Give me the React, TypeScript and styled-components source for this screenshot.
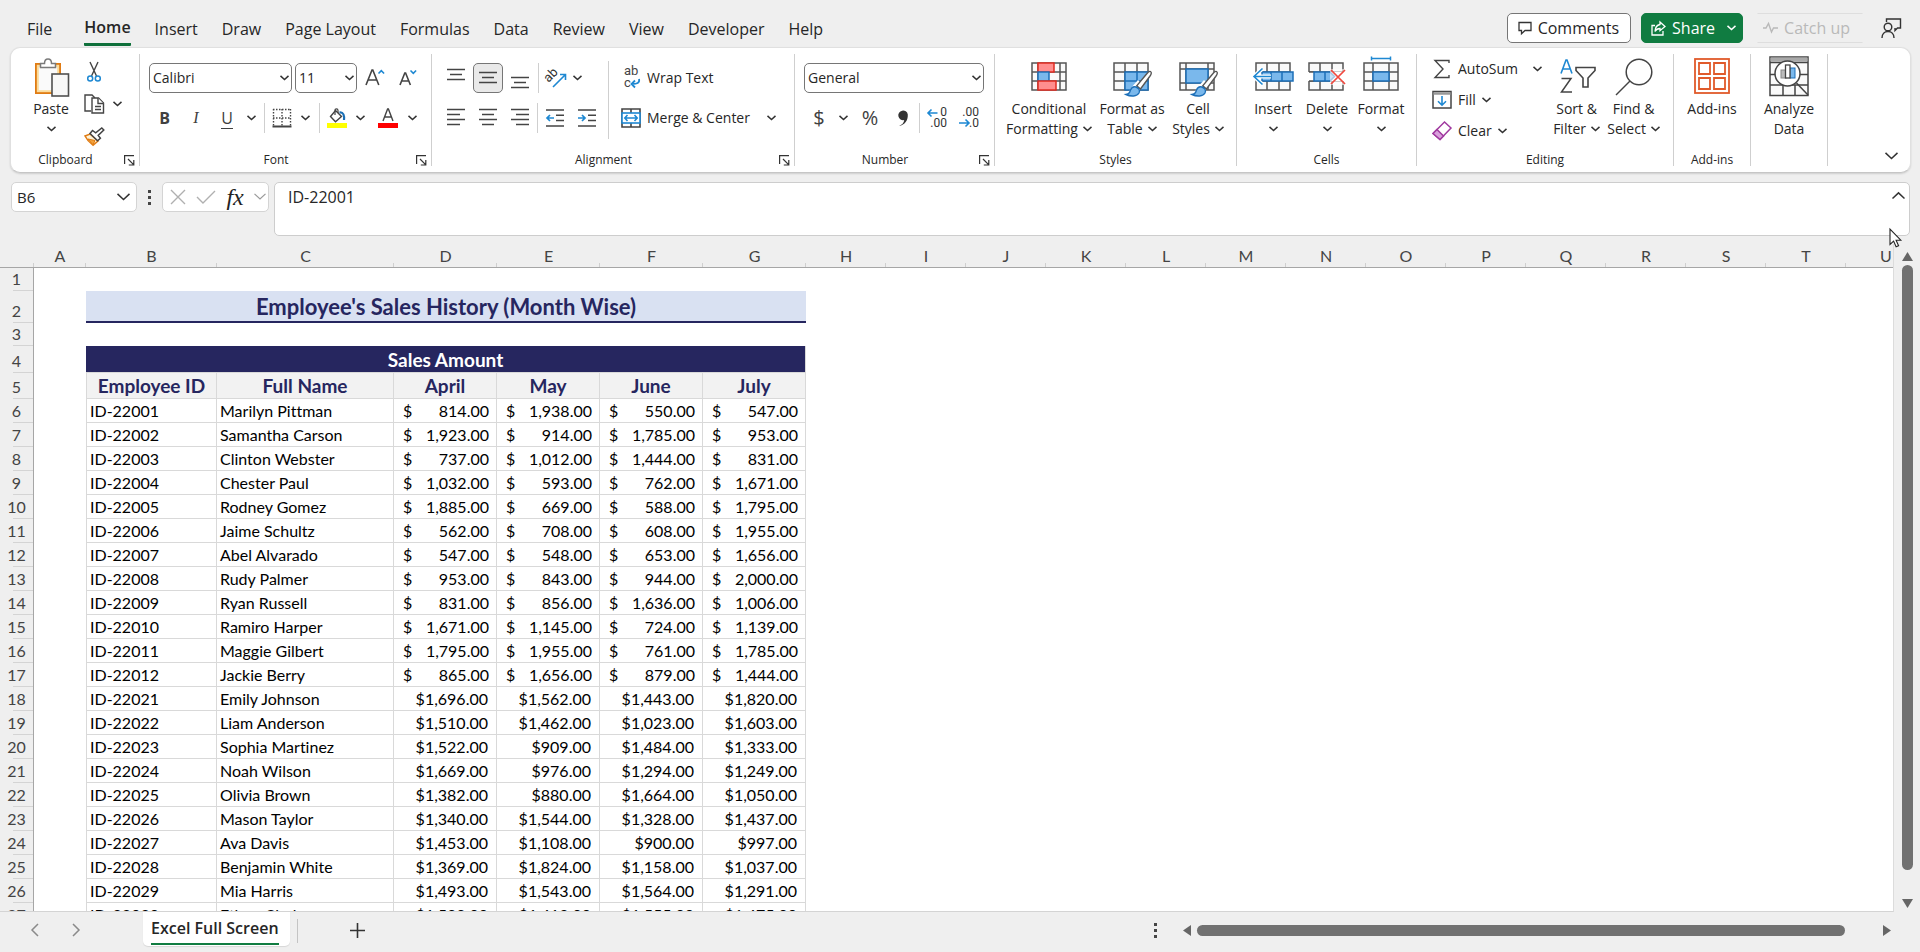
import React from 'react';
import styled, { createGlobalStyle, css } from 'styled-components';

const ui = `"Open Sans", "Noto Sans", sans-serif`;
const cell = `Lato, "Open Sans", sans-serif`;
const navy = '#26265f';
const blue = '#1e88d2';
const ink = '#404040';

const Global = createGlobalStyle`
  *, *::before, *::after { box-sizing: border-box; }
  body { margin: 0; background: #efefef; font-family: ${ui}; color: #262626; }
  button, select, input, textarea { font: inherit; color: inherit; }
  svg { display: block; flex: none; overflow: visible; }
`;

const Window = styled.div`
  height: 100vh;
  display: flex;
  flex-direction: column;
  overflow: hidden;
  background: #efefef;
`;

/* ---------- top tabs ---------- */

const TopBar = styled.header`
  display: flex;
  align-items: center;
  justify-content: space-between;
  height: 47px;
  flex: none;
  padding: 0 18px 0 27px;
`;

const Tabs = styled.nav`
  display: flex;
  gap: 24px;
  padding-top: 10px;
`;

const Tab = styled.button<{ $active?: boolean; $first?: boolean }>`
  border: 0;
  padding: 0;
  margin-right: ${p => (p.$first ? 8 : 0)}px;
  background: none;
  font-size: 16px;
  line-height: 30px;
  height: 34px;
  white-space: nowrap;
  ${p => p.$active && css`
    font-weight: 600;
    border-bottom: 3px solid #0f703b;
    border-radius: 1px;
  `}
`;

const TopActions = styled.div`
  display: flex;
  align-items: center;
  padding-top: 9px;
`;

const ActionButton = styled.button<{ $kind?: 'primary' | 'quiet' }>`
  display: flex;
  align-items: center;
  gap: 6px;
  height: 30px;
  padding: 0 11px 0 10px;
  margin-right: 10px;
  border: 1px solid #767676;
  border-radius: 5px;
  background: #fff;
  font-size: 16px;
  line-height: 20px;
  white-space: nowrap;
  ${p => p.$kind === 'primary' && css`
    background: #107c41;
    border-color: #107c41;
    color: #fff;
    padding: 0 6px 0 9px;
    margin-right: 14px;
  `}
  ${p => p.$kind === 'quiet' && css`
    background: none;
    border-color: #dedede transparent;
    border-radius: 0;
    color: #b9b9b9;
    padding: 0 12px 0 5px;
    margin-right: 18px;
  `}
`;

const ShareChevron = styled.span`
  padding-left: 6px;
`;

const PlainButton = styled.button`
  border: 0;
  background: none;
  padding: 0;
  display: flex;
  align-items: center;
  justify-content: center;
`;

/* ---------- ribbon ---------- */

const Ribbon = styled.section`
  flex: none;
  display: flex;
  margin: 0 9px 0 10px;
  padding: 6px 0;
  height: 126px;
  background: #fff;
  border: 1px solid #e0e0e0;
  border-bottom-color: #c6c6c6;
  border-radius: 10px;
  box-shadow: 0 1px 2px rgba(0, 0, 0, 0.14);
`;

const GroupBox = styled.section<{ $w: number }>`
  width: ${p => p.$w}px;
  flex: none;
  display: flex;
  flex-direction: column;
  justify-content: space-between;
  border-right: 1px solid #cfcfcf;
`;

const GroupBody = styled.div<{ $pad?: number }>`
  display: flex;
  height: 96px;
  padding-left: ${p => p.$pad ?? 8}px;
`;

const GroupFoot = styled.footer<{ $launcher?: boolean }>`
  display: grid;
  grid-template-columns: ${p => (p.$launcher ? '1fr 19px' : '1fr')};
  align-items: end;
  height: 12px;
`;

const GroupName = styled.h2`
  margin: 0;
  font-size: 12px;
  line-height: 12px;
  font-weight: 400;
  text-align: center;
  white-space: nowrap;
`;

const Stack = styled.div<{ $top?: number; $gap?: number }>`
  display: flex;
  flex-direction: column;
  padding-top: ${p => p.$top ?? 9}px;
  gap: ${p => p.$gap ?? 10}px;
`;

const Row = styled.div<{ $gap?: number; $left?: number }>`
  display: flex;
  align-items: center;
  height: 30px;
  gap: ${p => p.$gap ?? 0}px;
  padding-left: ${p => p.$left ?? 0}px;
`;

const Tool = styled.button<{ $w?: number; $on?: boolean }>`
  width: ${p => p.$w ?? 32}px;
  height: 30px;
  flex: none;
  display: flex;
  align-items: center;
  justify-content: center;
  padding: 0;
  border: 0;
  background: none;
  font-size: 16px;
  line-height: 20px;
  color: ${ink};
  ${p => p.$on && css`
    width: 30px;
    margin: 0 1px;
    background: #e9e9e9;
    border: 1px solid #767676;
    border-radius: 5px;
  `}
`;

const LabelTool = styled.button`
  display: flex;
  align-items: center;
  gap: 6px;
  height: 30px;
  padding: 0;
  border: 0;
  background: none;
  font-size: 14px;
  line-height: 20px;
  white-space: nowrap;
`;

const BigTool = styled.button<{ $w: number }>`
  width: ${p => p.$w}px;
  flex: none;
  display: flex;
  flex-direction: column;
  align-items: center;
  padding: 0;
  border: 0;
  background: none;
  font-size: 14px;
  line-height: 20px;
  white-space: nowrap;
`;

const BigIcon = styled.span`
  display: flex;
  align-items: flex-end;
  justify-content: center;
  height: 45px;
`;

const BigLine = styled.span`
  display: flex;
  align-items: center;
  gap: 5px;
  height: 20px;
`;

const Divider = styled.span<{ $h?: number; $m?: number }>`
  width: 1px;
  height: ${p => p.$h ?? 30}px;
  margin: 0 ${p => p.$m ?? 2}px;
  background: #cfcfcf;
  flex: none;
`;

const Combo = styled.span<{ $w: number }>`
  position: relative;
  width: ${p => p.$w}px;
  height: 30px;
  flex: none;
  > select {
    appearance: none;
    width: 100%;
    height: 100%;
    padding: 0 20px 0 3px;
    border: 1px solid #767676;
    border-radius: 5px;
    background: #fff;
    font-size: 14px;
    line-height: 20px;
    color: #262626;
  }
  > svg {
    position: absolute;
    right: 3px;
    top: 12px;
    pointer-events: none;
  }
`;

const Letter = styled.span<{ $b?: boolean; $i?: boolean; $u?: boolean }>`
  font-size: 16px;
  line-height: 20px;
  font-weight: ${p => (p.$b ? 700 : 400)};
  font-style: ${p => (p.$i ? 'italic' : 'normal')};
  font-family: ${p => (p.$i ? '"Liberation Serif", serif' : ui)};
  border-bottom: ${p => (p.$u ? `1px solid ${ink}` : '0')};
`;

const Sign = styled.span`
  font-size: 20px;
  line-height: 24px;
`;

const RibbonEnd = styled.div`
  flex: 1;
  display: flex;
  align-items: flex-end;
  justify-content: flex-end;
  padding: 0 12px 6px 0;
`;

/* ---------- formula bar ---------- */

const FormulaBar = styled.section`
  flex: none;
  display: flex;
  align-items: flex-start;
  margin: 9px 10px 0 11px;
`;

const NameBox = styled.label`
  display: flex;
  align-items: center;
  width: 126px;
  height: 30px;
  padding-right: 6px;
  background: #fff;
  border: 1px solid #d4d4d4;
  border-radius: 5px;
  > input {
    flex: 1;
    min-width: 0;
    border: 0;
    padding: 0 0 0 5px;
    background: none;
    font-size: 15px;
    line-height: 20px;
  }
`;

const Dots = styled.span`
  display: flex;
  flex-direction: column;
  gap: 3px;
  > i { width: 3px; height: 3px; background: #454545; }
`;

const DotsSlot = styled.div`
  display: flex;
  align-items: center;
  justify-content: center;
  width: 25px;
  height: 30px;
`;

const FxBox = styled.div`
  display: flex;
  align-items: center;
  justify-content: space-between;
  width: 107px;
  height: 30px;
  padding: 0 2px 0 7px;
  margin-right: 5px;
  background: #fff;
  border: 1px solid #d4d4d4;
  border-radius: 5px;
`;

const Fx = styled.span`
  font: italic 400 24px/24px "Liberation Serif", serif;
  color: #222;
`;

const FormulaField = styled.div`
  flex: 1;
  display: flex;
  align-items: flex-start;
  height: 54px;
  padding-right: 4px;
  background: #fff;
  border: 1px solid #cdcdcd;
  border-radius: 5px;
  > textarea {
    flex: 1;
    height: 50px;
    resize: none;
    border: 0;
    outline: 0;
    padding: 4px 0 0 13px;
    background: none;
    font-size: 16px;
    line-height: 20px;
  }
  > button { margin-top: 9px; }
`;

/* ---------- sheet ---------- */

const SheetArea = styled.main`
  flex: 1;
  min-height: 0;
  display: flex;
  margin-top: 8px;
`;

const SheetView = styled.div`
  flex: 1;
  min-width: 0;
  overflow: hidden;
  border-bottom: 1px solid #d4d4d4;
  border-right: 1px solid #dcdcdc;
  background: linear-gradient(#efefef 24px, #fff 24px);
`;

const Grid = styled.table`
  table-layout: fixed;
  width: 1926px;
  border-collapse: separate;
  border-spacing: 0;
  font-family: ${cell};
  font-variant-ligatures: none;
  font-size: 16px;
  line-height: 20px;
  color: #000;
`;

const ColHead = styled.th`
  height: 24px;
  padding: 0;
  font-weight: 400;
  color: #444;
  border-bottom: 1px solid #a6a6a6;
  background: linear-gradient(#cfcfcf, #cfcfcf) right bottom / 1px 4px no-repeat #efefef;
`;

const RowHead = styled.th`
  padding: 0 5px 2px 0;
  text-align: center;
  vertical-align: bottom;
  font-weight: 400;
  color: #444;
  border-right: 1px solid #a6a6a6;
  background: linear-gradient(#d4d4d4, #d4d4d4) right bottom / 20px 1px no-repeat #efefef;
  padding: 0 0 2px;
`;

const SheetRow = styled.tr<{ $h: number }>`
  height: ${p => p.$h}px;
`;

const Blank = styled.td`
  padding: 0;
`;

const TitleCell = styled.td`
  padding: 2px 0 0;
  background: #d9e1f2;
  border-bottom: 2px solid ${navy};
  color: ${navy};
  font-weight: 700;
  font-size: 22px;
  line-height: 26px;
  text-align: center;
`;

const BandCell = styled.td`
  padding: 1px 0 0;
  background: ${navy};
  border-right: 1px solid #d9d9d9;
  border-bottom: 1px solid #d9d9d9;
  color: #fff;
  font-weight: 700;
  font-size: 19px;
  line-height: 22px;
  text-align: center;
`;

const HeadCell = styled.th`
  padding: 1px 0 0;
  background: #f2f2f2;
  border-right: 1px solid #d9d9d9;
  border-bottom: 1px solid #d9d9d9;
  color: ${navy};
  font-weight: 700;
  font-size: 19px;
  line-height: 22px;
  ${Blank} + & { border-left: 1px solid #d9d9d9; }
`;

const Cell = styled.td<{ $kind?: 'money' | 'right' }>`
  padding: 1px 3px 0;
  border-right: 1px solid #d9d9d9;
  border-bottom: 1px solid #d9d9d9;
  white-space: nowrap;
  ${Blank} + & { border-left: 1px solid #d9d9d9; }
  ${p => p.$kind && css`
    text-align: right;
    padding-right: ${p.$kind === 'money' ? 7 : 8}px;
  `}
`;

const Money = styled.span`
  display: flex;
  justify-content: space-between;
  padding-left: 6px;
`;

const VBar = styled.aside`
  width: 26px;
  flex: none;
  display: flex;
  flex-direction: column;
  align-items: center;
  padding: 8px 0 4px;
`;

const VTrack = styled.div`
  flex: 1;
  width: 11px;
  padding: 4px 0 29px;
`;

const Thumb = styled.div`
  height: 100%;
  width: 100%;
  border-radius: 6px;
  background: #717171;
`;

/* ---------- bottom bar ---------- */

const BottomBar = styled.footer`
  flex: none;
  display: flex;
  align-items: flex-start;
  height: 40px;
`;

const NavPair = styled.div`
  display: flex;
  width: 143px;
  height: 36px;
  align-items: center;
  gap: 33px;
  padding-left: 31px;
`;

const SheetTab = styled.button`
  height: 34px;
  padding: 0 11px 0 8px;
  border: 0;
  border-radius: 0 0 5px 5px;
  background: #fff;
  box-shadow: 0 1px 1px rgba(0, 0, 0, 0.1);
  font-size: 16px;
  font-weight: 600;
  line-height: 28px;
  white-space: nowrap;
  > span {
    display: block;
    height: 31px;
    border-bottom: 2px solid #107c41;
  }
`;

const TabEdge = styled.span`
  width: 1px;
  height: 24px;
  margin: 7px 52px 0 7px;
  background: #c4c4c4;
`;

const AddTab = styled(PlainButton)`
  height: 36px;
`;

const HBar = styled.div`
  margin-left: auto;
  display: flex;
  align-items: center;
  width: 41%;
  height: 37px;
  padding-right: 29px;
  padding-left: 21px;
`;

const HTrack = styled.div`
  flex: 1;
  height: 11px;
  padding: 0 38px 0 6px;
`;

const HDots = styled(Dots)`
  margin-right: 26px;
`;

const Cursor = styled.svg`
  position: fixed;
  top: 228px;
  right: 18px;
  pointer-events: none;
`;

/* ---------- icons ---------- */

const Chevron = ({ w = 8, color = '#333', up = false, sw = 1.5 }: { w?: number; color?: string; up?: boolean; sw?: number }) => {
  const h = w / 2 + 1;
  return (
    <svg width={w + 1} height={Math.ceil(h) + 1} viewBox={`-0.5 -0.5 ${w + 1} ${Math.ceil(h) + 1}`} fill="none" stroke={color} strokeWidth={sw}>
      <path d={up ? `M0 ${w / 2} L${w / 2} 0.4 L${w} ${w / 2}` : `M0 0.4 L${w / 2} ${w / 2} L${w} 0.4`} />
    </svg>
  );
};

const Launcher = () => (
  <svg width="11" height="11" viewBox="0 0 11 11" fill="none" stroke="#333" strokeWidth="1.2">
    <path d="M0.6 9V0.6H10M4 4l5.6 5.6M9.8 5v5H4.8" />
  </svg>
);

const PasteIcon = () => (
  <svg width="36" height="41" viewBox="-2 0 36 41">
    <rect x="1" y="6" width="24" height="29" fill="#fafafa" stroke="#e07b13" strokeWidth="2" />
    <rect x="2.8" y="7.8" width="20.4" height="25.4" fill="none" stroke="#fbdc9c" strokeWidth="2" />
    <path d="M5.500 9.500V5.500h4c0-6 7-6 7 0h4v4z" fill="#fff" stroke="#7a7a7a" strokeWidth="1.5" />
    <rect x="17" y="16" width="16.500" height="22" fill="#f8f8f8" stroke="#505050" strokeWidth="1.6" />
  </svg>
);

const CutIcon = () => (
  <svg width="14" height="20" viewBox="0 0 14 20" fill="none">
    <path d="M3 0l6.5 14M11 0L4.5 14" stroke="#444" strokeWidth="1.4" />
    <circle cx="3.2" cy="16.4" r="2.5" stroke={blue} strokeWidth="1.5" />
    <circle cx="10.8" cy="16.4" r="2.5" stroke={blue} strokeWidth="1.5" />
  </svg>
);

const CopyIcon = () => (
  <svg width="21" height="20" viewBox="0 0 21 20" fill="#fff" stroke="#444" strokeWidth="1.4">
    <path d="M7 17H1V1h7l3 3" />
    <path d="M8 4h6.500l5 5v10H8z" />
    <path d="M14 4v5.500h5.500M11 12.500h6M11 15.500h6" />
  </svg>
);

const PainterIcon = () => (
  <svg width="21" height="19" viewBox="0 0 21 19" fill="none">
    <path d="M1 9l5-2 8 7-5 4.200C6 16 3 13 1 9z" fill="#fff3d6" stroke="#e07b13" strokeWidth="1.500" />
    <path d="M4 12l7 1.500-2 4.200z" fill="#f3a33b" stroke="#e07b13" />
    <path d="M6 6.500l2.500-3 3.200 2.400L17.800 1l2 2-5.600 5.400 2.200 2.800-2.800 2.600z" fill="#fff" stroke="#444" strokeWidth="1.500" />
  </svg>
);

const GrowIcon = ({ small }: { small?: boolean }) => (
  <svg width="20" height="20" viewBox="0 0 20 20" fill="none">
    <path d={small ? 'M2 17L6.800 5h.8l4.800 12M3.600 13h7.200' : 'M1 17L7 2h.8l6 15M3.200 12h8.400'} stroke="#444" strokeWidth="1.600" />
    <path d={small ? 'M12.500 2.500l2.800 2.800 2.800-2.800' : 'M13.500 5.500l2.800-2.800 2.800 2.800'} stroke={blue} strokeWidth="1.600" />
  </svg>
);

const BorderIcon = () => (
  <svg width="20" height="20" viewBox="0 0 20 20" fill="none" stroke="#444">
    <path d="M1 1.500h18M1 10h18M1.500 1v17M10 1v17M18.500 1v17" strokeWidth="1.400" strokeDasharray="1.500 1.500" />
    <path d="M0.500 18.500h19" strokeWidth="2" />
  </svg>
);

const FillIcon = () => (
  <svg width="20" height="20" viewBox="0 0 20 20" fill="none">
    <rect x="0" y="15" width="20" height="5" fill="#ff0" />
    <path d="M8.500 2.500l6 6-6 5.200L3.500 8.500z" fill="#fff" stroke="#444" strokeWidth="1.400" />
    <path d="M8 7V2.500Q8 .8 9.500 .8T11 2.500V5" stroke="#444" strokeWidth="1.200" />
    <path d="M12.500 4.500c4-.5 5 3 4.500 7.500" stroke="#1b6fb5" strokeWidth="2.200" />
  </svg>
);

const FontColorIcon = () => (
  <svg width="20" height="20" viewBox="0 0 20 20" fill="none">
    <rect x="0" y="15" width="20" height="5" fill="red" />
    <path d="M5 13L9.600 1h.8L15 13M6.600 9h6.800" stroke="#444" strokeWidth="1.400" />
  </svg>
);

const Lines = ({ rows, h = 18 }: { rows: [number, number, number][]; h?: number }) => (
  <svg width="18" height={h} viewBox={`0 0 18 ${h}`} stroke="#444" strokeWidth="1.500">
    {rows.map(([y, a, b]) => <path key={y} d={`M${a} ${y}.500H${b}`} />)}
  </svg>
);

const OrientIcon = () => (
  <svg width="21" height="22" viewBox="0 0 21 22" fill="none">
    <text x="0" y="12" fontSize="13" fontFamily="Roboto" fill="#333" transform="rotate(-45 6 11)">ab</text>
    <path d="M7 20L19 8M14 7.500h5.500V13" stroke={blue} strokeWidth="1.600" />
  </svg>
);

const IndentIcon = ({ right }: { right?: boolean }) => (
  <svg width="18" height="18" viewBox="0 0 18 18" fill="none" stroke="#444" strokeWidth="1.500">
    <path d="M0 1h18M10 6.300h8M10 11.600h8M0 17h18" />
    <path d={right ? 'M0 9h7M4 6l3 3-3 3' : 'M1 9h7M4 6L1 9l3 3'} stroke={blue} strokeWidth="1.700" />
  </svg>
);

const WrapIcon = () => (
  <svg width="20" height="22" viewBox="0 0 20 22" fill="none">
    <text x="3" y="8" fontSize="13" fontFamily="Roboto" fill="#444">ab</text>
    <text x="3" y="20" fontSize="13" fontFamily="Roboto" fill="#444">c</text>
    <path d="M18 12c1 4-2 5-7 5M14 13.500L10.500 17l3.500 3.500" stroke={blue} strokeWidth="1.800" />
  </svg>
);

const MergeIcon = () => (
  <svg width="20" height="20" viewBox="0 0 20 20" fill="none">
    <path d="M1 1h18v18H1zM10 1v18" fill="#fff" stroke="#444" strokeWidth="1.600" />
    <rect x="1" y="5" width="18" height="10" fill="#fff" stroke={blue} strokeWidth="1.600" />
    <path d="M4 10h12M6.500 7L3.800 10l2.700 3M13.500 7l2.700 3-2.700 3" stroke={blue} strokeWidth="1.600" />
  </svg>
);

const CommaIcon = () => (
  <svg width="12" height="18" viewBox="0 0 12 18" fill="#333">
    <path d="M2 17c3.500-1.400 5-3.400 5.200-6A4.800 4.800 0 1 1 10.800 5.500C11 11.500 8 15.800 2 17z" />
  </svg>
);

const DecimalIcon = ({ less }: { less?: boolean }) => (
  <svg width="20" height="22" viewBox="0 0 20 22" fill="none">
    <text x="20" y="9" textAnchor="end" fontSize="12" fontFamily="Roboto" fill="#333">{less ? '.00' : '0'}</text>
    <text x="20" y="20" textAnchor="end" fontSize="12" fontFamily="Roboto" fill="#333">{less ? '.0' : '.00'}</text>
    <path d={less ? 'M0 16h10M6.500 12.500L10 16l-3.500 3.500' : 'M1 6h9.500M4.500 2.500L1 6l3.500 3.500'} stroke={blue} strokeWidth="1.600" />
  </svg>
);

const GridBase = () => (
  <path d="M1 1h34v27H1zM1 10h34M1 19h34M12 1v27M24 1v27" fill="#fafafa" stroke="#555" strokeWidth="1.500" />
);

const Brush = () => (
  <>
    <path d="M17 27l8-9 5 5-8 11-6 1z" fill="#fff" />
    <path d="M37.500 9.500c1.600 1 .6 3-.8 5L27.500 27l-3.800-3.200L34 11.500c1.200-1.500 2.500-2.600 3.500-2z" fill="#fff" stroke="#555" strokeWidth="1.400" />
    <path d="M23 25c2.500 1 4.500 3 3 6-2 3.500-8 4-13 1.500 4-.5 3.500-2 4.500-4.500 1-2.500 3-3.800 5.500-3z" fill="#7ab8ec" stroke="#1c6fb8" strokeWidth="1.400" />
  </>
);

const CondIcon = () => (
  <svg width="36" height="37" viewBox="0 0 36 37">
    <path d="M1 1h34v27H1zM1 10h34M1 19h34M7 1v27M29 1v27" fill="#fafafa" stroke="#555" strokeWidth="1.500" />
    <rect x="7" y="1" width="16" height="9" fill="#ff8e8e" stroke="#e02b20" strokeWidth="1.500" />
    <rect x="7" y="10" width="11" height="9" fill="#7ab8ec" stroke="#1c6fb8" strokeWidth="1.500" />
    <rect x="7" y="19" width="18" height="9" fill="#ff8e8e" stroke="#e02b20" strokeWidth="1.500" />
  </svg>
);

const TableIcon = () => (
  <svg width="39" height="37" viewBox="0 0 39 37">
    <GridBase />
    <path d="M12 10h23v18H12zM12 19h23M24 10v18" fill="#7ab8ec" stroke="#1c6fb8" strokeWidth="1.500" />
    <Brush />
  </svg>
);

const CellStyleIcon = () => (
  <svg width="39" height="37" viewBox="0 0 39 37">
    <path d="M1 1h34v27H1zM1 7h34M1 21h34M7 1v27M29 1v27" fill="#fafafa" stroke="#555" strokeWidth="1.500" />
    <rect x="7" y="7" width="22" height="14" fill="#7ab8ec" stroke="#1c6fb8" strokeWidth="1.500" />
    <Brush />
  </svg>
);

const InsertIcon = () => (
  <svg width="41" height="37" viewBox="0 0 41 37">
    <g transform="translate(2 0)"><GridBase /></g>
    <path d="M9 10h31v9H9zM18 10v9M29 10v9" fill="#7ab8ec" stroke="#1c6fb8" strokeWidth="1.500" />
    <path d="M18 14.500H1M9.500 6.500l-8.500 8 8.500 8" fill="none" stroke="#fff" strokeWidth="4" />
    <path d="M18 14.500H1M9.500 6.500l-8.500 8 8.500 8" fill="none" stroke={blue} strokeWidth="1.600" />
  </svg>
);

const DeleteIcon = () => (
  <svg width="38" height="37" viewBox="0 0 38 37">
    <GridBase />
    <path d="M0 10h36v9H0z" fill="#fff" />
    <path d="M1 10h5M1 19h5" stroke="#555" strokeWidth="1.500" />
    <path d="M6 10h16l4.500 4.500L22 19H6zM17 10v9" fill="#7ab8ec" stroke="#1c6fb8" strokeWidth="1.500" />
    <path d="M22 7h15v16H22z" fill="#fff" opacity="0.6" />
    <path d="M23 8l14 14M37 8L23 22" stroke="#f0483e" strokeWidth="1.700" />
  </svg>
);

const FormatIcon = () => (
  <svg width="36" height="43" viewBox="0 0 36 43">
    <g transform="translate(0 6)">
      <path d="M1 1h34v27H1zM1 10h34M1 19h34M10 1v27M26 1v27" fill="#fafafa" stroke="#555" strokeWidth="1.500" />
      <rect x="10" y="10" width="16" height="9" fill="#7ab8ec" stroke="#1c6fb8" strokeWidth="1.500" />
    </g>
    <path d="M8.500 2.500h19M8.500 .5v4M27.500 .5v4" stroke={blue} strokeWidth="1.500" />
  </svg>
);

const SumIcon = () => (
  <svg width="20" height="20" viewBox="0 0 20 20" fill="none" stroke="#444" strokeWidth="1.400">
    <path d="M17 4V1.500H3l8 8.500-8 8.500h14V16" />
  </svg>
);

const FillDownIcon = () => (
  <svg width="20" height="20" viewBox="0 0 20 20" fill="none">
    <rect x="1" y="1.500" width="18" height="16.500" fill="#fff" stroke="#444" strokeWidth="1.500" />
    <path d="M1.500 3.500h17" stroke="#999" strokeWidth="2.500" />
    <path d="M10 6v9M6 11.200l4 4 4-4" stroke={blue} strokeWidth="1.600" />
  </svg>
);

const ClearIcon = () => (
  <svg width="20" height="20" viewBox="0 0 20 20" fill="none" stroke="#a0399f" strokeWidth="1.500">
    <path d="M1 12.500L12.500 1l6.500 6L8 18.500z" fill="#fff" />
    <path d="M1 12.500l4-4 6.500 6.500L8 18.500z" fill="#d9a0dc" />
  </svg>
);

const SortIcon = () => (
  <svg width="38" height="40" viewBox="0 0 38 40" fill="none">
    <path d="M3 14.500L8 1h1l5 13.500M4.800 10h7.400" stroke={blue} strokeWidth="1.600" />
    <path d="M3.500 19.500h9.500L3.500 33h10.500" stroke="#444" strokeWidth="1.500" />
    <path d="M18 8.500h19v3l-7 7.500v9h-5v-9l-7-7.500z" stroke="#444" strokeWidth="1.600" />
  </svg>
);

const FindIcon = () => (
  <svg width="38" height="41" viewBox="0 0 38 41" fill="none" stroke="#444" strokeWidth="1.500">
    <circle cx="24" cy="14" r="12.800" />
    <path d="M15 23L1 37" />
  </svg>
);

const AddinsIcon = () => (
  <svg width="36" height="41" viewBox="0 0 36 41" fill="#fff" stroke="#e05a2b">
    <rect x="1" y="1" width="34" height="34" strokeWidth="1.800" />
    <path d="M5 5h11v11H5zM20 5h11v11H20zM5 20h11v11H5zM20 20h11v11H20z" strokeWidth="1.800" />
  </svg>
);

const AnalyzeIcon = () => (
  <svg width="40" height="43" viewBox="0 0 40 43" fill="none" stroke="#444" strokeWidth="1.500">
    <rect x="1" y="1" width="38" height="38.500" fill="#fafafa" />
    <path d="M1.500 3.500h37" stroke="#a9a9a9" strokeWidth="4" />
    <path d="M1 6.500h38M1 18.500h38M1 29h38M14 29v10M26 29v10" />
    <circle cx="18.500" cy="17.500" r="12.500" fill="#fff" />
    <rect x="12" y="14" width="5" height="8" fill="#bbb" stroke="#888" strokeWidth="1" />
    <rect x="21" y="12" width="5" height="10" fill="#7ab8ec" stroke="#1c6fb8" strokeWidth="1" />
    <rect x="16.500" y="9" width="4.500" height="13" fill="#fff" strokeWidth="1.300" />
    <path d="M27.500 27L39 39" />
  </svg>
);

const CommentIcon = () => (
  <svg width="14" height="14" viewBox="0 0 14 14" fill="none" stroke="#333" strokeWidth="1.300">
    <path d="M1 1.500h12v8H7L3.500 12.800V9.500H1z" />
  </svg>
);

const ShareIcon = () => (
  <svg width="15" height="15" viewBox="0 0 15 15" fill="none" stroke="#fff" strokeWidth="1.300">
    <path d="M4 4.500H1V14h11V10" />
    <path d="M9 1l5 4.500-5 4.200V7.500c-2 0-3.800.7-5 3 .2-4 2-6.500 5-7z" />
  </svg>
);

const PulseIcon = () => (
  <svg width="15" height="12" viewBox="0 0 15 12" fill="none" stroke="#b9b9b9" strokeWidth="1.400">
    <path d="M0 6h3l2.500-4.500 3 8.500L10.500 6H15" />
  </svg>
);

const PersonIcon = () => (
  <svg width="21" height="21" viewBox="0 0 21 21" fill="none" stroke="#333" strokeWidth="1.400">
    <path d="M5.500 4V1h14v9h-3l-2.500 2.500V10" />
    <circle cx="7" cy="9" r="3.800" />
    <path d="M1 20c0-4 2.500-6.500 6-6.500s6 2.500 6 6.500" />
  </svg>
);

const Tri = ({ dir }: { dir: 'up' | 'down' | 'left' | 'right' }) => {
  const d = {
    up: 'M5.500 0L11 9H0z',
    down: 'M5.500 9L11 0H0z',
    left: 'M0 5.500L8 0v11z',
    right: 'M8 5.500L0 0v11z',
  }[dir];
  const tall = dir === 'left' || dir === 'right';
  return (
    <svg width={tall ? 8 : 11} height={tall ? 11 : 9} fill="#666"><path d={d} /></svg>
  );
};

/* ---------- data ---------- */

const menu = ['File', 'Home', 'Insert', 'Draw', 'Page Layout', 'Formulas', 'Data', 'Review', 'View', 'Developer', 'Help'];
const columns = 'ABCDEFGHIJKLMNOPQRSTU'.split('');
const widths = [34, 52, 131, 177, 103, 103, 103, 103, ...Array(14).fill(80)];

const people: [string, string, string, string, string, string][] = [
  ['ID-22001', 'Marilyn Pittman', '814', '1,938', '550', '547'],
  ['ID-22002', 'Samantha Carson', '1,923', '914', '1,785', '953'],
  ['ID-22003', 'Clinton Webster', '737', '1,012', '1,444', '831'],
  ['ID-22004', 'Chester Paul', '1,032', '593', '762', '1,671'],
  ['ID-22005', 'Rodney Gomez', '1,885', '669', '588', '1,795'],
  ['ID-22006', 'Jaime Schultz', '562', '708', '608', '1,955'],
  ['ID-22007', 'Abel Alvarado', '547', '548', '653', '1,656'],
  ['ID-22008', 'Rudy Palmer', '953', '843', '944', '2,000'],
  ['ID-22009', 'Ryan Russell', '831', '856', '1,636', '1,006'],
  ['ID-22010', 'Ramiro Harper', '1,671', '1,145', '724', '1,139'],
  ['ID-22011', 'Maggie Gilbert', '1,795', '1,955', '761', '1,785'],
  ['ID-22012', 'Jackie Berry', '865', '1,656', '879', '1,444'],
  ['ID-22021', 'Emily Johnson', '1,696', '1,562', '1,443', '1,820'],
  ['ID-22022', 'Liam Anderson', '1,510', '1,462', '1,023', '1,603'],
  ['ID-22023', 'Sophia Martinez', '1,522', '909', '1,484', '1,333'],
  ['ID-22024', 'Noah Wilson', '1,669', '976', '1,294', '1,249'],
  ['ID-22025', 'Olivia Brown', '1,382', '880', '1,664', '1,050'],
  ['ID-22026', 'Mason Taylor', '1,340', '1,544', '1,328', '1,437'],
  ['ID-22027', 'Ava Davis', '1,453', '1,108', '900', '997'],
  ['ID-22028', 'Benjamin White', '1,369', '1,824', '1,158', '1,037'],
  ['ID-22029', 'Mia Harris', '1,493', '1,543', '1,564', '1,291'],
  ['ID-22030', 'Ethan Clark', '1,588', '1,413', '1,555', '1,475'],
];
const accountingRows = 12;

/* ---------- parts ---------- */

const Group = ({ name, w, pad, launcher, children }: {
  name?: string; w: number; pad?: number; launcher?: boolean; children: React.ReactNode;
}) => (
  <GroupBox $w={w}>
    <GroupBody $pad={pad}>{children}</GroupBody>
    <GroupFoot $launcher={launcher}>
      {name && <GroupName>{name}</GroupName>}
      {launcher && <PlainButton aria-label={`${name} settings`}><Launcher /></PlainButton>}
    </GroupFoot>
  </GroupBox>
);

const Big = ({ icon, w, lines, menu: hasMenu }: {
  icon: React.ReactNode; w: number; lines: string[]; menu?: boolean;
}) => (
  <BigTool $w={w}>
    <BigIcon>{icon}</BigIcon>
    {lines.map((line, i) => (
      <BigLine key={i}>
        {line}
        {hasMenu && i === lines.length - 1 && <Chevron />}
      </BigLine>
    ))}
  </BigTool>
);

const Select = ({ label, value, w }: { label: string; value: string; w: number }) => (
  <Combo $w={w}>
    <select aria-label={label} defaultValue={value}><option>{value}</option></select>
    <Chevron />
  </Combo>
);

const MenuArrow = ({ label, w = 16 }: { label: string; w?: number }) => (
  <Tool $w={w} aria-label={label}><Chevron /></Tool>
);

export default function App() {
  return (
    <Window>
      <Global />
      <TopBar>
        <Tabs>
          {menu.map(m => <Tab key={m} $active={m === 'Home'} $first={m === 'File'}>{m}</Tab>)}
        </Tabs>
        <TopActions>
          <ActionButton><CommentIcon />Comments</ActionButton>
          <ActionButton $kind="primary">
            <ShareIcon />Share<ShareChevron><Chevron color="#fff" /></ShareChevron>
          </ActionButton>
          <ActionButton $kind="quiet"><PulseIcon />Catch up</ActionButton>
          <PlainButton aria-label="Feedback"><PersonIcon /></PlainButton>
        </TopActions>
      </TopBar>

      <Ribbon>
        <Group name="Clipboard" w={129} pad={12} launcher>
          <Big icon={<PasteIcon />} w={56} lines={['Paste', '']} menu />
          <Stack $top={3} $gap={2}>
            <Row><Tool $w={30} aria-label="Cut"><CutIcon /></Tool></Row>
            <Row><Tool $w={30} aria-label="Copy"><CopyIcon /></Tool><MenuArrow label="Copy options" /></Row>
            <Row><Tool $w={30} aria-label="Format Painter"><PainterIcon /></Tool></Row>
          </Stack>
        </Group>

        <Group name="Font" w={292} pad={9} launcher>
          <Stack>
            <Row $gap={3}>
              <Select label="Font" value="Calibri" w={143} />
              <Select label="Font size" value="11" w={62} />
              <Tool $w={30} aria-label="Increase font size"><GrowIcon /></Tool>
              <Tool $w={30} aria-label="Decrease font size"><GrowIcon small /></Tool>
            </Row>
            <Row>
              <Tool $w={31} aria-label="Bold"><Letter $b>B</Letter></Tool>
              <Tool aria-label="Italic"><Letter $i>I</Letter></Tool>
              <Tool $w={30} aria-label="Underline"><Letter $u>U</Letter></Tool>
              <MenuArrow label="Underline styles" w={18} />
              <Divider $m={4} />
              <Tool $w={26} aria-label="Borders"><BorderIcon /></Tool>
              <MenuArrow label="Border styles" w={20} />
              <Divider $m={4} />
              <Tool $w={26} aria-label="Fill color"><FillIcon /></Tool>
              <MenuArrow label="Fill colors" w={20} />
              <Tool $w={36} aria-label="Font color"><FontColorIcon /></Tool>
              <MenuArrow label="Font colors" w={12} />
            </Row>
          </Stack>
        </Group>

        <Group name="Alignment" w={363} pad={8} launcher>
          <Stack>
            <Row>
              <Tool aria-label="Top align"><Lines rows={[[1, 0, 18], [6, 3, 15], [11, 0, 18]]} h={21} /></Tool>
              <Tool $on aria-label="Middle align"><Lines rows={[[3, 0, 18], [8, 3, 15], [13, 0, 18]]} /></Tool>
              <Tool aria-label="Bottom align"><Lines rows={[[9, 0, 18], [14, 3, 15], [19, 0, 18]]} h={21} /></Tool>
              <Divider />
              <Tool $w={30} aria-label="Orientation"><OrientIcon /></Tool>
              <MenuArrow label="Orientation options" w={12} />
            </Row>
            <Row>
              <Tool aria-label="Align left"><Lines rows={[[0, 0, 18], [5, 0, 13], [10, 0, 18], [15, 0, 13]]} /></Tool>
              <Tool aria-label="Center"><Lines rows={[[0, 0, 18], [5, 3, 15], [10, 0, 18], [15, 3, 15]]} /></Tool>
              <Tool aria-label="Align right"><Lines rows={[[0, 0, 18], [5, 5, 18], [10, 0, 18], [15, 5, 18]]} /></Tool>
              <Divider $m={1} />
              <Tool aria-label="Decrease indent"><IndentIcon /></Tool>
              <Tool aria-label="Increase indent"><IndentIcon right /></Tool>
            </Row>
          </Stack>
          <Stack $top={7}><Divider $h={78} $m={5} /></Stack>
          <Stack>
            <Row $left={7}><LabelTool><WrapIcon />Wrap Text</LabelTool></Row>
            <Row $left={7} $gap={14}>
              <LabelTool><MergeIcon />Merge &amp; Center</LabelTool>
              <MenuArrow label="Merge options" />
            </Row>
          </Stack>
        </Group>

        <Group name="Number" w={200} pad={9} launcher>
          <Stack>
            <Row><Select label="Number format" value="General" w={180} /></Row>
            <Row>
              <Tool $w={30} aria-label="Accounting format"><Sign>$</Sign></Tool>
              <MenuArrow label="Currencies" w={18} />
              <Tool $w={36} aria-label="Percent"><Sign>%</Sign></Tool>
              <Tool $w={30} aria-label="Comma style"><CommaIcon /></Tool>
              <Divider $m={1} />
              <Tool aria-label="Increase decimal"><DecimalIcon /></Tool>
              <Tool aria-label="Decrease decimal"><DecimalIcon less /></Tool>
            </Row>
          </Stack>
        </Group>

        <Group name="Styles" w={242} pad={8}>
          <Big icon={<CondIcon />} w={92} lines={['Conditional', 'Formatting']} menu />
          <Big icon={<TableIcon />} w={74} lines={['Format as', 'Table']} menu />
          <Big icon={<CellStyleIcon />} w={58} lines={['Cell', 'Styles']} menu />
        </Group>

        <Group name="Cells" w={180} pad={9}>
          <Big icon={<InsertIcon />} w={54} lines={['Insert', '']} menu />
          <Big icon={<DeleteIcon />} w={54} lines={['Delete', '']} menu />
          <Big icon={<FormatIcon />} w={54} lines={['Format', '']} menu />
        </Group>

        <Group name="Editing" w={257} pad={15}>
          <Stack $top={0} $gap={1}>
            <Row $gap={14}><LabelTool><SumIcon />AutoSum</LabelTool><MenuArrow label="Functions" w={10} /></Row>
            <Row><LabelTool><FillDownIcon />Fill<Chevron /></LabelTool></Row>
            <Row><LabelTool><ClearIcon />Clear<Chevron /></LabelTool></Row>
          </Stack>
          <Row $left={6} />
          <Big icon={<SortIcon />} w={57} lines={['Sort &', 'Filter']} menu />
          <Big icon={<FindIcon />} w={57} lines={['Find &', 'Select']} menu />
        </Group>

        <Group name="Add-ins" w={77} pad={0}>
          <Big icon={<AddinsIcon />} w={76} lines={['Add-ins']} />
        </Group>

        <Group w={77} pad={0}>
          <Big icon={<AnalyzeIcon />} w={76} lines={['Analyze', 'Data']} />
        </Group>

        <RibbonEnd>
          <PlainButton aria-label="Ribbon display options"><Chevron w={12} /></PlainButton>
        </RibbonEnd>
      </Ribbon>

      <FormulaBar>
        <NameBox>
          <input aria-label="Name box" defaultValue="B6" />
          <Chevron w={12} />
        </NameBox>
        <DotsSlot><Dots><i /><i /><i /></Dots></DotsSlot>
        <FxBox>
          <PlainButton aria-label="Cancel">
            <svg width="16" height="16" viewBox="0 0 16 16" stroke="#b0b0b0" strokeWidth="1.400"><path d="M1 1l14 14M15 1L1 15" /></svg>
          </PlainButton>
          <PlainButton aria-label="Enter">
            <svg width="20" height="14" viewBox="0 0 20 14" fill="none" stroke="#b0b0b0" strokeWidth="1.400"><path d="M1 7l6 6L19 1" /></svg>
          </PlainButton>
          <PlainButton aria-label="Insert function"><Fx>fx</Fx></PlainButton>
          <PlainButton aria-label="Function options"><Chevron w={11} color="#999" sw={1.2} /></PlainButton>
        </FxBox>
        <FormulaField>
          <textarea aria-label="Formula" defaultValue="ID-22001" />
          <PlainButton aria-label="Collapse formula bar"><Chevron w={12} up /></PlainButton>
        </FormulaField>
      </FormulaBar>

      <SheetArea>
        <SheetView>
          <Grid>
            <colgroup>{widths.map((w, i) => <col key={i} width={w} />)}</colgroup>
            <thead>
              <tr>
                <ColHead aria-label="Select all" />
                {columns.map(c => <ColHead key={c}>{c}</ColHead>)}
              </tr>
            </thead>
            <tbody>
              <SheetRow $h={23}><RowHead>1</RowHead><Blank /></SheetRow>
              <SheetRow $h={32}>
                <RowHead>2</RowHead><Blank />
                <TitleCell colSpan={6}>Employee's Sales History (Month Wise)</TitleCell>
              </SheetRow>
              <SheetRow $h={23}><RowHead>3</RowHead><Blank /></SheetRow>
              <SheetRow $h={27}>
                <RowHead>4</RowHead><Blank />
                <BandCell colSpan={6}>Sales Amount</BandCell>
              </SheetRow>
              <SheetRow $h={26}>
                <RowHead>5</RowHead><Blank />
                {['Employee ID', 'Full Name', 'April', 'May', 'June', 'July'].map(h => <HeadCell key={h}>{h}</HeadCell>)}
              </SheetRow>
              {people.map(([id, name, ...amounts], r) => (
                <SheetRow key={id} $h={24}>
                  <RowHead>{r + 6}</RowHead>
                  <Blank />
                  <Cell>{id}</Cell>
                  <Cell>{name}</Cell>
                  {amounts.map((a, i) => r < accountingRows
                    ? <Cell key={i} $kind="money"><Money><span>$</span><span>{a}.00</span></Money></Cell>
                    : <Cell key={i} $kind="right">${a}.00</Cell>)}
                </SheetRow>
              ))}
            </tbody>
          </Grid>
        </SheetView>
        <VBar>
          <Tri dir="up" />
          <VTrack><Thumb /></VTrack>
          <Tri dir="down" />
        </VBar>
      </SheetArea>

      <BottomBar>
        <NavPair>
          <PlainButton aria-label="Previous sheet">
            <svg width="8" height="14" viewBox="0 0 8 14" fill="none" stroke="#8a8a8a" strokeWidth="1.500"><path d="M7 1L1 7l6 6" /></svg>
          </PlainButton>
          <PlainButton aria-label="Next sheet">
            <svg width="8" height="14" viewBox="0 0 8 14" fill="none" stroke="#8a8a8a" strokeWidth="1.500"><path d="M1 1l6 6-6 6" /></svg>
          </PlainButton>
        </NavPair>
        <SheetTab><span>Excel Full Screen</span></SheetTab>
        <TabEdge />
        <AddTab aria-label="New sheet">
          <svg width="15" height="15" viewBox="0 0 15 15" stroke="#333" strokeWidth="1.600"><path d="M0 7.500h15M7.500 0v15" /></svg>
        </AddTab>
        <HBar>
          <HDots><i /><i /><i /></HDots>
          <Tri dir="left" />
          <HTrack><Thumb /></HTrack>
          <Tri dir="right" />
        </HBar>
      </BottomBar>

      <Cursor width="13" height="20" viewBox="0 0 13 20">
        <path d="M1 1v15.500l3.600-3.400 2.500 5.700 2.500-1.100-2.500-5.500h4.700z" fill="#fff" stroke="#222" strokeWidth="1.100" />
      </Cursor>
    </Window>
  );
}
